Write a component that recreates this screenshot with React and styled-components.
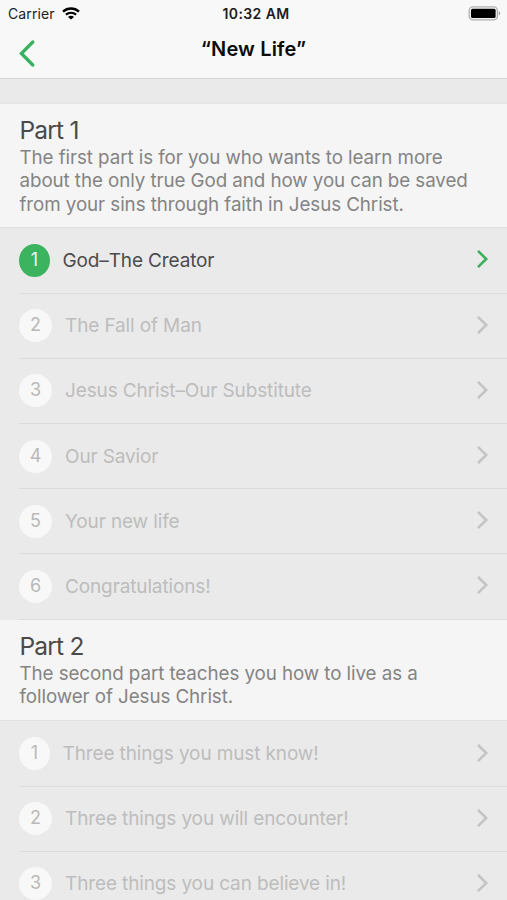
import React from "react";
import styled, { createGlobalStyle } from "styled-components";

const parts = [
  {
    title: "Part 1",
    height: 123,
    text: [
      "The first part is for you who wants to learn more",
      "about the only true God and how you can be saved",
      "from your sins through faith in Jesus Christ.",
    ],
    lessons: [
      "God–The Creator",
      "The Fall of Man",
      "Jesus Christ–Our Substitute",
      "Our Savior",
      "Your new life",
      "Congratulations!",
    ],
  },
  {
    title: "Part 2",
    height: 100.6,
    text: [
      "The second part teaches you how to live as a",
      "follower of Jesus Christ.",
    ],
    lessons: [
      "Three things you must know!",
      "Three things you will encounter!",
      "Three things you can believe in!",
    ],
  },
];

function WifiIcon() {
  return (
    <svg width="18" height="13" viewBox="0 0 18 13" fill="none" stroke="#000">
      <path d="M1 4.6C5.6 0.4 12.4 0.4 17 4.6" strokeWidth="2.4" />
      <path d="M3.9 7.7C6.9 5.1 11.1 5.1 14.1 7.7" strokeWidth="2.2" />
      <path d="M9 12.6L6 9.9C7.7 8.5 10.3 8.5 12 9.9Z" fill="#000" stroke="none" />
    </svg>
  );
}

function BatteryIcon() {
  return (
    <svg width="33" height="15" viewBox="0 0 33 15">
      <rect x="1.2" y="0.9" width="28.2" height="13" rx="3.6" fill="#f4f4f4" stroke="#b0b0b0" strokeWidth="1.3" />
      <rect x="3" y="2.7" width="24.6" height="9.4" rx="1.6" fill="#000" />
      <path d="M30.8 5.3C32.3 6 32.3 8.8 30.8 9.5Z" fill="#888" />
    </svg>
  );
}

function BackIcon() {
  return (
    <svg width="18" height="29" viewBox="0 0 18 29" fill="none">
      <path
        d="M14.8 3L3.4 14.5L14.8 26"
        stroke="#3bb160"
        strokeWidth="3.3"
        strokeLinecap="round"
      />
    </svg>
  );
}

function ChevronIcon({ color }) {
  return (
    <svg width="13" height="20" viewBox="0 0 13 20" fill="none">
      <path d="M2 1.9L10.2 10L2 18.1" stroke={color} strokeWidth="2.6" />
    </svg>
  );
}

function App() {
  return (
    <Screen>
      <GlobalStyle />
      <TopBar>
        <StatusBar>
          <Carrier>
            <span>Carrier</span>
            <WifiIcon />
          </Carrier>
          <Clock>10:32 AM</Clock>
          <Battery>
            <BatteryIcon />
          </Battery>
        </StatusBar>
        <NavBar>
          <BackButton aria-label="Back">
            <BackIcon />
          </BackButton>
          <Title>“New Life”</Title>
        </NavBar>
      </TopBar>
      <Spacer />
      {parts.map((part, p) => (
        <section key={part.title}>
          <PartHeader $height={part.height}>
            <PartTitle>{part.title}</PartTitle>
            {part.text.map((line) => (
              <PartLine key={line}>{line}</PartLine>
            ))}
          </PartHeader>
          <Lessons>
            {part.lessons.map((lesson, i) => {
              const active = p === 0 && i === 0;
              return (
                <Lesson key={lesson} $active={active}>
                  <Badge $active={active} $narrow={i === 0}>
                    {i + 1}
                  </Badge>
                  <LessonName>{lesson}</LessonName>
                  <ChevronIcon color={active ? "#3bb160" : "#c4c4c4"} />
                </Lesson>
              );
            })}
          </Lessons>
        </section>
      ))}
    </Screen>
  );
}

const GlobalStyle = createGlobalStyle`
  * {
    box-sizing: border-box;
  }
  body {
    margin: 0;
    background: #eaeaea;
    overflow: hidden;
  }
`;

const Screen = styled.div`
  width: 507px;
  height: 900px;
  overflow: hidden;
  background: #eaeaea;
  font-family: Inter, "Liberation Sans", sans-serif;
  svg {
    display: block;
    flex: none;
  }
`;

const TopBar = styled.header`
  height: 79px;
  background: #f8f8f8;
  border-bottom: 1px solid #d6d6d6;
`;

const StatusBar = styled.div`
  display: grid;
  grid-template-columns: 1fr auto 1fr;
  align-items: center;
  height: 27px;
  padding: 0 6px 0 8px;
  font-size: 14px;
  line-height: 27px;
  color: #1c1c1c;
`;

const Carrier = styled.div`
  display: flex;
  align-items: center;
  gap: 7px;
  letter-spacing: 0.1px;
`;

const Clock = styled.div`
  padding-left: 3px;
  font-weight: 600;
  letter-spacing: 0.4px;
`;

const Battery = styled.div`
  display: flex;
  justify-content: flex-end;
`;

const NavBar = styled.div`
  display: grid;
  grid-template-columns: 80px 1fr 80px;
  height: 51px;
`;

const BackButton = styled.button`
  display: flex;
  padding: 12px 0 0 18px;
  border: 0;
  background: none;
`;

const Title = styled.h1`
  margin: 0;
  text-align: center;
  font-size: 20px;
  line-height: 44px;
  font-weight: 600;
  letter-spacing: 0.15px;
  color: #0c0c0c;
`;

const Spacer = styled.div`
  height: 25px;
  border-bottom: 2px solid #e6e6e6;
`;

const PartHeader = styled.div`
  height: ${(props) => props.$height}px;
  padding: 11px 19.5px 0;
  background: #f5f5f5;
`;

const PartTitle = styled.h2`
  margin: 0;
  font-size: 24.5px;
  line-height: 31px;
  font-weight: 400;
  letter-spacing: -0.8px;
  color: #4a4a4a;
`;

const PartLine = styled.div`
  font-size: 18.8px;
  line-height: 23.4px;
  letter-spacing: -0.08px;
  white-space: nowrap;
  color: #848484;
`;

const Lessons = styled.ul`
  margin: 0;
  padding: 0.4px 0 0 19px;
  list-style: none;
  background: #eaeaea;
  border-top: 1px solid #e0e0e0;
`;

const Lesson = styled.li`
  display: flex;
  align-items: center;
  height: 65.2px;
  padding-right: 18px;
  border-bottom: 1px solid #dddddd;
  font-size: 19px;
  color: ${(props) => (props.$active ? "#4c4c4c" : "#bdbdbd")};
  svg {
    margin-bottom: 2px;
  }
`;

const Badge = styled.span`
  display: flex;
  justify-content: center;
  flex: none;
  width: ${(props) => (props.$narrow ? "31px" : "33px")};
  height: 33px;
  margin-right: ${(props) => (props.$narrow ? "12.5px" : "13px")};
  border-radius: 50%;
  background: ${(props) => (props.$active ? "#3cb35f" : "#f8f8f8")};
  color: ${(props) => (props.$active ? "#eefaf1" : "#b9b9b9")};
  font-size: 18px;
  line-height: 32px;
`;

const LessonName = styled.span`
  flex: 1;
  letter-spacing: -0.13px;
`;

export default App;
